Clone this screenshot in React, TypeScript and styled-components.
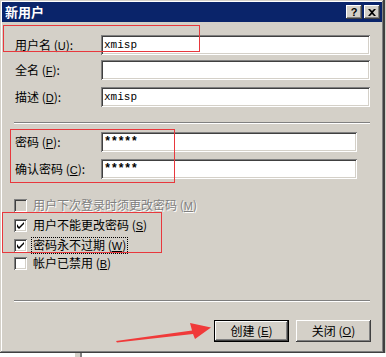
import React from 'react'
import styled, {createGlobalStyle, css} from 'styled-components'

const GlobalStyle = createGlobalStyle`
    html, body {
        margin: 0;
        padding: 0;
        background: #ffffff;
    }
    body {
        font-family: "Noto Sans CJK SC", "Liberation Sans", sans-serif;
        font-size: 12px;
        color: #000000;
    }
`

const Page = styled.div`
    width: 386px;
    height: 357px;
    overflow: hidden;
`

const Top = styled.div`
    display: flex;
`

const BackWindow = styled.div`
    width: 2px;
    height: 353px;
    background: #d4d0c8;
    border-left: 1px solid #404040;
`

const Stub = styled.div`
    margin-left: 75px;
    width: 5px;
    height: 4px;
    background: #d4d0c8;
    border-right: 2px solid #808080;
`

const Window = styled.div`
    position: relative;
    width: 384px;
    height: 353px;
    box-sizing: border-box;
    padding: 2px;
    background: #d4d0c8;
    box-shadow: inset -1px -1px #404040, inset 1px 1px #d4d0c8,
        inset -2px -2px #808080, inset 2px 2px #ffffff;
    display: flex;
    flex-direction: column;
`

const TitleBar = styled.div`
    height: 20px;
    background: #0a246a;
    display: flex;
    align-items: center;
    padding: 0 2px 0 3px;
`

const Title = styled.div`
    flex: 1;
    color: #ffffff;
    font-weight: bold;
    font-size: 13px;
    line-height: 16px;
`

const CaptionButton = styled.div<{$gap?: number}>`
    width: 16px;
    height: 14px;
    box-sizing: border-box;
    margin-left: ${p => p.$gap || 0}px;
    background: #d4d0c8;
    box-shadow: inset -1px -1px #404040, inset 1px 1px #ffffff,
        inset -2px -2px #808080;
    display: flex;
    align-items: center;
    justify-content: center;
    font-family: "Liberation Sans", sans-serif;
    font-weight: bold;
    font-size: 11px;
    line-height: 11px;
`

const Content = styled.div`
    flex: 1;
    display: flex;
    flex-direction: column;
    padding: 13px 12px 0 12px;
`

const FieldRow = styled.div<{$top?: number}>`
    display: flex;
    align-items: center;
    height: 20px;
    margin-top: ${p => p.$top || 0}px;
`

const Label = styled.div`
    width: 87px;
    padding-left: 1px;
    box-sizing: border-box;
    line-height: 14px;
    white-space: nowrap;
`

const Key = styled.span`
    font-family: "Liberation Sans", sans-serif;
    font-size: 11px;
    text-decoration: underline;
`

const Input = styled.div<{$width: number; $secret?: boolean}>`
    width: ${p => p.$width}px;
    height: 20px;
    box-sizing: border-box;
    background: #ffffff;
    box-shadow: inset 1px 1px #808080, inset -1px -1px #ffffff,
        inset 2px 2px #404040, inset -2px -2px #d4d0c8;
    padding: 3px 3px 0 3px;
    font-family: "Liberation Mono", monospace;
    font-size: 11px;
    line-height: 14px;
    ${p => p.$secret && css`
        font-weight: bold;
        font-size: 12px;
        letter-spacing: -0.5px;
    `}
`

const Separator = styled.div<{$top: number}>`
    margin-top: ${p => p.$top}px;
    height: 0;
    border-top: 1px solid #808080;
    border-bottom: 1px solid #ffffff;
`

const CheckRow = styled.div<{$top: number; $disabled?: boolean}>`
    display: flex;
    align-items: center;
    height: 13px;
    margin-top: ${p => p.$top}px;
    color: ${p => p.$disabled ? '#808080' : '#000000'};
    text-shadow: ${p => p.$disabled ? '1px 1px #ffffff' : 'none'};
`

const Box = styled.div<{$disabled?: boolean}>`
    width: 13px;
    height: 13px;
    box-sizing: border-box;
    background: ${p => p.$disabled ? '#d4d0c8' : '#ffffff'};
    box-shadow: inset 1px 1px #808080, inset -1px -1px #ffffff,
        inset 2px 2px #404040, inset -2px -2px #d4d0c8;
    display: flex;
    align-items: center;
    justify-content: center;
    flex-shrink: 0;
`

const CheckText = styled.div<{$focus?: boolean}>`
    margin-left: 4px;
    padding: 0 1px;
    line-height: 13px;
    white-space: nowrap;
    border: 1px ${p => p.$focus ? 'dotted #000000' : 'solid transparent'};
`

const ButtonBar = styled.div`
    margin-top: 18px;
    display: flex;
    justify-content: flex-end;
    gap: 7px;
    margin-right: -1px;
`

const Button = styled.div<{$default?: boolean}>`
    width: 75px;
    height: 22px;
    box-sizing: border-box;
    background: #d4d0c8;
    display: flex;
    align-items: center;
    justify-content: center;
    line-height: 14px;
    box-shadow: inset -1px -1px #404040, inset 1px 1px #ffffff,
        inset -2px -2px #808080;
    ${p => p.$default && css`
        border: 1px solid #000000;
    `}
`

const Mark = styled.div<{$left: number; $top: number; $width: number; $height: number}>`
    position: absolute;
    left: ${p => p.$left}px;
    top: ${p => p.$top}px;
    width: ${p => p.$width}px;
    height: ${p => p.$height}px;
    box-sizing: border-box;
    border: 1px solid #e8383d;
    pointer-events: none;
`

const Arrow = styled.svg`
    position: absolute;
    left: 0;
    top: 0;
    pointer-events: none;
`

function CheckMark() {
    return (
        <svg width="7" height="7" viewBox="0 0 7 7">
            <path d="M0 2v3l2 2 5-5V0L2 5z" fill="#000"/>
        </svg>
    )
}

interface ICheckProps {
    top: number;
    checked?: boolean;
    disabled?: boolean;
    focus?: boolean;
    text: string;
    keyChar: string;
}

function Check(props: ICheckProps) {
    return (
        <CheckRow $top={props.top} $disabled={props.disabled}>
            <Box $disabled={props.disabled}>{props.checked && <CheckMark/>}</Box>
            <CheckText $focus={props.focus}>
                {props.text} (<Key>{props.keyChar}</Key>)
            </CheckText>
        </CheckRow>
    )
}

export default function App(): React.ReactElement {
    return (
        <Page>
            <GlobalStyle/>
            <Top>
                <Window>
                    <TitleBar>
                        <Title>新用户</Title>
                        <CaptionButton>?</CaptionButton>
                        <CaptionButton $gap={2}>
                            <svg width="8" height="7" viewBox="0 0 8 7">
                                <path d="M0 0h2l2 2 2-2h2L5 3.5 8 7H6L4 5 2 7H0l3-3.5z" fill="#000"/>
                            </svg>
                        </CaptionButton>
                    </TitleBar>
                    <Content>
                        <FieldRow>
                            <Label>用户名 (<Key>U</Key>):</Label>
                            <Input $width={269}>xmisp</Input>
                        </FieldRow>
                        <FieldRow $top={5}>
                            <Label>全名 (<Key>F</Key>):</Label>
                            <Input $width={269}/>
                        </FieldRow>
                        <FieldRow $top={7}>
                            <Label>描述 (<Key>D</Key>):</Label>
                            <Input $width={269}>xmisp</Input>
                        </FieldRow>
                        <Separator $top={15}/>
                        <FieldRow $top={8}>
                            <Label>密码 (<Key>P</Key>):</Label>
                            <Input $width={256} $secret>*****</Input>
                        </FieldRow>
                        <FieldRow $top={7}>
                            <Label>确认密码 (<Key>C</Key>):</Label>
                            <Input $width={256} $secret>*****</Input>
                        </FieldRow>
                        <Check top={20} disabled text="用户下次登录时须更改密码" keyChar="M"/>
                        <Check top={7} checked text="用户不能更改密码" keyChar="S"/>
                        <Check top={7} checked focus text="密码永不过期" keyChar="W"/>
                        <Check top={5} text="帐户已禁用" keyChar="B"/>
                        <Separator $top={30}/>
                        <ButtonBar>
                            <Button $default>创建 (<Key>E</Key>)</Button>
                            <Button>关闭 (<Key>O</Key>)</Button>
                        </ButtonBar>
                    </Content>
                    <Mark $left={3} $top={25} $width={197} $height={27}/>
                    <Mark $left={10} $top={129} $width={165} $height={54}/>
                    <Mark $left={2} $top={212} $width={160} $height={41}/>
                    <Arrow width="384" height="353" viewBox="0 0 384 353">
                        <polygon
                            points="116,341 192,330.5 190,323 211,327.5 195,339 193,334 117,342.5"
                            fill="#f03a3a"
                        />
                    </Arrow>
                </Window>
                <BackWindow/>
            </Top>
            <Stub/>
        </Page>
    )
}
